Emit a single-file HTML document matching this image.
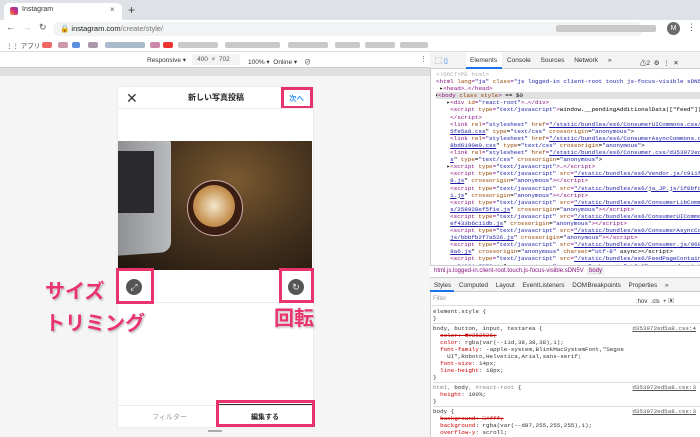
<!DOCTYPE html>
<html><head><meta charset="utf-8"><style>
*{margin:0;padding:0;box-sizing:border-box}
body{width:700px;height:437px;overflow:hidden;position:relative;background:#fff;font-family:"Liberation Sans","Noto Sans CJK JP",sans-serif;}
.a{position:absolute}
.mono{font-family:"Liberation Mono","Noto Sans CJK JP",monospace;font-size:5.9px;white-space:nowrap;line-height:7.1px;overflow:hidden}
.pk{border:3px solid #e8336d;position:absolute}
.lab{color:#e8336d;font-weight:bold;font-size:20px;position:absolute;font-family:"Noto Sans CJK JP",sans-serif;text-shadow:0 0 2px #fff,1px 1px 2px #999}
.tag{color:#881280}.at{color:#994500}.v{color:#1a1aa6}.u{color:#1a1aa6;text-decoration:underline}
.blur{position:absolute;top:42px;height:6px;background:#c9c9c9;border-radius:2px}
</style></head><body>
<div class="a" style="left:0;top:0;width:700px;height:20px;background:#dee1e6"></div>
<div class="a" style="left:4px;top:3px;width:118px;height:17px;background:#fff;border-radius:5px 5px 0 0"></div>
<div class="a" style="left:10px;top:7px;width:8px;height:8px;border-radius:2px;background:linear-gradient(45deg,#f9a13a,#d1307c,#7a3eb1)"></div>
<div class="a" style="left:22px;top:6px;font-size:7px;color:#333">Instagram</div>
<div class="a" style="left:110px;top:5px;font-size:8px;color:#555">×</div>
<div class="a" style="left:128px;top:3px;font-size:12px;color:#444">+</div>
<div class="a" style="left:0;top:20px;width:700px;height:18px;background:#fff"></div>
<div class="a" style="left:6px;top:22px;font-size:9px;color:#555">←&nbsp;&nbsp;&nbsp;<span style="color:#bbb">→</span>&nbsp;&nbsp;&nbsp;↻</div>
<div class="a" style="left:53px;top:22px;width:590px;height:14px;background:#f1f3f4;border-radius:7px"></div>
<div class="a" style="left:60px;top:24px;font-size:7.5px;color:#222">🔒 instagram.com<span style="color:#777">/create/style/</span></div>
<div class="blur" style="top:25px;left:556px;width:100px;height:7px"></div>
<div class="a" style="left:667px;top:22px;width:13px;height:13px;border-radius:50%;background:#6b6b6b;color:#fff;font-size:7px;text-align:center;line-height:13px">M</div>
<div class="a" style="left:687px;top:22px;font-size:9px;color:#555">⋮</div>
<div class="a" style="left:0;top:38px;width:700px;height:14px;background:#fff;border-bottom:1px solid #ddd"></div>
<div class="a" style="left:6px;top:40px;font-size:6.5px;color:#444">⋮⋮ アプリ</div>
<div class="blur" style="left:42px;width:10px;background:#e66"></div>
<div class="blur" style="left:58px;width:10px;background:#c9a"></div>
<div class="blur" style="left:72px;width:8px;background:#5b8fe0"></div>
<div class="blur" style="left:88px;width:10px;background:#a9a"></div>
<div class="blur" style="left:105px;width:40px;background:#abc"></div>
<div class="blur" style="left:150px;width:10px;background:#c8a"></div>
<div class="blur" style="left:163px;width:10px;background:#e33"></div>
<div class="blur" style="left:178px;width:40px"></div>
<div class="blur" style="left:225px;width:55px"></div>
<div class="blur" style="left:288px;width:40px"></div>
<div class="blur" style="left:335px;width:25px"></div>
<div class="blur" style="left:365px;width:30px"></div>
<div class="blur" style="left:400px;width:28px"></div>
<div class="a" style="left:0;top:52px;width:430px;height:15px;background:#fff"></div>
<div class="a" style="left:147px;top:56px;font-size:6.5px;color:#333">Responsive ▾</div>
<div class="a" style="left:192px;top:54px;width:48px;height:11px;background:#f3f3f3"></div>
<div class="a" style="left:197px;top:56px;font-size:6.5px;color:#555">400 &nbsp;× &nbsp;702</div>
<div class="a" style="left:248px;top:56px;font-size:6.5px;color:#333">100% ▾ &nbsp;Online ▾ &nbsp;&nbsp;&nbsp;⊘</div>
<div class="a" style="left:420px;top:55px;font-size:7px;color:#555">⋮</div>
<div class="a" style="left:0;top:67px;width:430px;height:9px;background:#e0e0e0;border-top:1px solid #ccc"></div>
<div class="a" style="left:0;top:76px;width:430px;height:361px;background:#f5f5f5"></div>
<div class="a" style="left:118px;top:87px;width:195px;height:340px;background:#fff;box-shadow:0 0 2px #ddd"></div>
<div class="a" style="left:126px;top:90px;font-size:14px;color:#333">✕</div>
<div class="a" style="left:188px;top:92px;font-size:8px;color:#222;font-weight:bold">新しい写真投稿</div>
<div class="a" style="left:289px;top:93px;font-size:7.5px;color:#3897f0;font-weight:bold">次へ</div>
<div class="pk" style="left:281px;top:87px;width:32px;height:22px"></div>
<div class="a" style="left:118px;top:108px;width:195px;height:1px;background:#eee"></div>
<div class="a" style="left:118px;top:141px;width:194px;height:129px;overflow:hidden;background:radial-gradient(ellipse at 60% 30%,#7a5a30 0%,#4a3520 45%,#1e150d 100%)">
 <div class="a" style="left:-5px;top:-5px;width:58px;height:118px;background:linear-gradient(90deg,#8a8c90,#b9bbbe);border-radius:0 10px 10px 0;transform:skewY(-4deg)"></div>
 <div class="a" style="left:0;top:10px;width:36px;height:62px;background:#2a2a2c"></div>
 <div class="a" style="left:69px;top:39px;width:56px;height:56px;border-radius:50%;background:#3a1e12;border:1px solid #caa"></div>
 <div class="a" style="left:75px;top:44px;width:42px;height:42px;border-radius:50%;background:radial-gradient(circle,#f3e6cc 0%,#c89556 60%,#9a6530 100%)"></div>
</div>
<div class="a" style="left:118px;top:302px;width:195px;height:1px;background:#eee"></div>
<div class="a" style="left:126px;top:279px;width:16px;height:16px;border-radius:50%;background:#555;color:#eee;font-size:9px;text-align:center;line-height:16px">⤢</div>
<div class="a" style="left:288px;top:279px;width:16px;height:16px;border-radius:50%;background:#555;color:#eee;font-size:9px;text-align:center;line-height:16px">↻</div>
<div class="pk" style="left:116px;top:268px;width:38px;height:36px"></div>
<div class="pk" style="left:279px;top:268px;width:35px;height:35px"></div>
<div class="lab" style="left:45px;top:275px">サイズ</div>
<div class="lab" style="left:45px;top:307px">トリミング</div>
<div class="lab" style="left:274px;top:302px">回転</div>
<div class="a" style="left:118px;top:405px;width:195px;height:1px;background:#eee"></div>
<div class="a" style="left:152px;top:412px;font-size:7px;color:#999">フィルター</div>
<div class="a" style="left:216px;top:404px;width:97px;height:1px;background:#333"></div>
<div class="a" style="left:251px;top:412px;font-size:7px;color:#222;font-weight:bold">編集する</div>
<div class="pk" style="left:216px;top:400px;width:99px;height:27px"></div>
<div class="a" style="left:208px;top:430px;width:14px;height:2px;border-top:1px solid #aaa;border-bottom:1px solid #aaa"></div>
<!-- devtools -->
<div class="a" style="left:430px;top:52px;width:270px;height:385px;background:#fff;border-left:1px solid #ccc"></div>
<div class="a" style="left:430px;top:52px;width:270px;height:17px;background:#f3f3f3;border-bottom:1px solid #ccc"></div>
<div class="a" style="left:435px;top:56px;font-size:7px;color:#555">⬚ <span style="color:#1a73e8">▯</span></div>
<div class="a" style="left:466px;top:52px;width:36px;height:17px;background:#fff;border-bottom:2px solid #1a73e8"></div>
<div class="a" style="left:470px;top:57px;font-size:6.5px;color:#333;word-spacing:8px">Elements Console Sources Network »</div>
<div class="a" style="left:640px;top:57px;font-size:6.5px;color:#333">⚠2 &nbsp;⚙ &nbsp;⋮ &nbsp;✕</div>
<div class="a mono" style="left:436px;top:71px;width:264px;height:194px">
<span style="color:#aaa">&lt;!DOCTYPE html&gt;</span><br>
<span class="tag">&lt;html <span class="at">lang</span>=<span class="v">"ja"</span> <span class="at">class</span>=<span class="v">"js logged-in client-root touch js-focus-visible sDN5V"</span>&gt;</span><br>
&nbsp;▸<span class="tag">&lt;head&gt;…&lt;/head&gt;</span><br>
<span style="background:#e0e0e0;display:inline-block;width:270px;margin-left:-6px;padding-left:1px">…▾<span class="tag">&lt;body <span class="at">class style</span>&gt;</span> == $0</span><br>
&nbsp;&nbsp;&nbsp;▸<span class="tag">&lt;div <span class="at">id</span>=<span class="v">"react-root"</span>&gt;…&lt;/div&gt;</span><br>
&nbsp;&nbsp;&nbsp;&nbsp;<span class="tag">&lt;script <span class="at">type</span>=<span class="v">"text/javascript"</span>&gt;</span>window.__pendingAdditionalData(["feed"]);<br>
&nbsp;&nbsp;&nbsp;&nbsp;<span class="tag">&lt;/script&gt;</span><br>
&nbsp;&nbsp;&nbsp;&nbsp;<span class="tag">&lt;link <span class="at">rel</span>=<span class="v">"stylesheet"</span> <span class="at">href</span>=<span class="u">"/static/bundles/es6/ConsumerUICommons.css/01aad4</span></span><br>
&nbsp;&nbsp;&nbsp;&nbsp;<span class="u">5fe5a8.css</span>" <span class="at">type</span>=<span class="v">"text/css"</span> <span class="at">crossorigin</span>=<span class="v">"anonymous"</span>&gt;<br>
&nbsp;&nbsp;&nbsp;&nbsp;<span class="tag">&lt;link <span class="at">rel</span>=<span class="v">"stylesheet"</span> <span class="at">href</span>=<span class="u">"/static/bundles/es6/ConsumerAsyncCommons.css/060</span></span><br>
&nbsp;&nbsp;&nbsp;&nbsp;<span class="u">8bd6190e0.css</span>" <span class="at">type</span>=<span class="v">"text/css"</span> <span class="at">crossorigin</span>=<span class="v">"anonymous"</span>&gt;<br>
&nbsp;&nbsp;&nbsp;&nbsp;<span class="tag">&lt;link <span class="at">rel</span>=<span class="v">"stylesheet"</span> <span class="at">href</span>=<span class="u">"/static/bundles/es6/Consumer.css/d353972ed5a8.cs</span></span><br>
&nbsp;&nbsp;&nbsp;&nbsp;<span class="u">s</span>" <span class="at">type</span>=<span class="v">"text/css"</span> <span class="at">crossorigin</span>=<span class="v">"anonymous"</span>&gt;<br>
&nbsp;&nbsp;&nbsp;▸<span class="tag">&lt;script <span class="at">type</span>=<span class="v">"text/javascript"</span>&gt;…&lt;/script&gt;</span><br>
&nbsp;&nbsp;&nbsp;&nbsp;<span class="tag">&lt;script <span class="at">type</span>=<span class="v">"text/javascript"</span> <span class="at">src</span>=<span class="u">"/static/bundles/es6/Vendor.js/c911f5848b7</span></span><br>
&nbsp;&nbsp;&nbsp;&nbsp;<span class="u">8.js</span>" <span class="at">crossorigin</span>=<span class="v">"anonymous"</span><span class="tag">&gt;&lt;/script&gt;</span><br>
&nbsp;&nbsp;&nbsp;&nbsp;<span class="tag">&lt;script <span class="at">type</span>=<span class="v">"text/javascript"</span> <span class="at">src</span>=<span class="u">"/static/bundles/es6/ja_JP.js/1f0bfdeda7f</span></span><br>
&nbsp;&nbsp;&nbsp;&nbsp;<span class="u">1.js</span>" <span class="at">crossorigin</span>=<span class="v">"anonymous"</span><span class="tag">&gt;&lt;/script&gt;</span><br>
&nbsp;&nbsp;&nbsp;&nbsp;<span class="tag">&lt;script <span class="at">type</span>=<span class="v">"text/javascript"</span> <span class="at">src</span>=<span class="u">"/static/bundles/es6/ConsumerLibCommons.j</span></span><br>
&nbsp;&nbsp;&nbsp;&nbsp;<span class="u">s/258928ef5f1e.js</span>" <span class="at">crossorigin</span>=<span class="v">"anonymous"</span><span class="tag">&gt;&lt;/script&gt;</span><br>
&nbsp;&nbsp;&nbsp;&nbsp;<span class="tag">&lt;script <span class="at">type</span>=<span class="v">"text/javascript"</span> <span class="at">src</span>=<span class="u">"/static/bundles/es6/ConsumerUICommons.js/</span></span><br>
&nbsp;&nbsp;&nbsp;&nbsp;<span class="u">ef433b6c11db.js</span>" <span class="at">crossorigin</span>=<span class="v">"anonymous"</span><span class="tag">&gt;&lt;/script&gt;</span><br>
&nbsp;&nbsp;&nbsp;&nbsp;<span class="tag">&lt;script <span class="at">type</span>=<span class="v">"text/javascript"</span> <span class="at">src</span>=<span class="u">"/static/bundles/es6/ConsumerAsyncCommons.</span></span><br>
&nbsp;&nbsp;&nbsp;&nbsp;<span class="u">js/bbbfb2f7a526.js</span>" <span class="at">crossorigin</span>=<span class="v">"anonymous"</span><span class="tag">&gt;&lt;/script&gt;</span><br>
&nbsp;&nbsp;&nbsp;&nbsp;<span class="tag">&lt;script <span class="at">type</span>=<span class="v">"text/javascript"</span> <span class="at">src</span>=<span class="u">"/static/bundles/es6/Consumer.js/9606c091a</span></span><br>
&nbsp;&nbsp;&nbsp;&nbsp;<span class="u">9a6.js</span>" <span class="at">crossorigin</span>=<span class="v">"anonymous"</span> <span class="at">charset</span>=<span class="v">"utf-8"</span> async&gt;&lt;/script&gt;<br>
&nbsp;&nbsp;&nbsp;&nbsp;<span class="tag">&lt;script <span class="at">type</span>=<span class="v">"text/javascript"</span> <span class="at">src</span>=<span class="u">"/static/bundles/es6/FeedPageContainer.js/</span></span><br>
&nbsp;&nbsp;&nbsp;&nbsp;<span class="u">ac54301af272.js</span>" <span class="at">crossorigin</span>=<span class="v">"anonymous"</span> <span class="at">charset</span>=<span class="v">"utf-8"</span> async&gt;&lt;/script&gt;
</div>
<div class="a" style="left:430px;top:265px;width:270px;height:13px;background:#fff;border-top:1px solid #ccc;border-bottom:1px solid #ccc"></div>
<div class="a" style="left:434px;top:268px;font-size:6px;color:#881280;white-space:nowrap">html.js.logged-in.client-root.touch.js-focus-visible.sDN5V &nbsp;<span style="background:#eee;padding:1px 2px">body</span></div>
<div class="a" style="left:430px;top:278px;width:270px;height:14px;background:#f3f3f3;border-bottom:1px solid #ccc"></div>
<div class="a" style="left:434px;top:282px;font-size:6.3px;color:#333;word-spacing:6px;white-space:nowrap">Styles Computed Layout Event&#8202;Listeners DOM&#8202;Breakpoints Properties »</div>
<div class="a" style="left:430px;top:290px;width:24px;height:2px;background:#1a73e8"></div>
<div class="a" style="left:433px;top:296px;font-size:6px;color:#999">Filter</div>
<div class="a" style="left:636px;top:296px;font-size:6px;color:#333">:hov &nbsp;.cls &nbsp;+ ▣</div>
<div class="a" style="left:430px;top:305px;width:270px;height:1px;background:#ddd"></div>
<div class="a mono" style="left:433px;top:308px;width:267px;height:129px;line-height:7px;color:#333">
element.style {<br>}<br>
<span style="display:block;border-top:1px solid #ddd;margin:1px 0 1px -3px;width:270px"></span>
body, button, input, textarea {<span style="float:right;margin-right:4px;color:#555;text-decoration:underline">d353972ed5a8.css:4</span><br>
&nbsp;&nbsp;<s style="color:#c80000">color: ■#262626;</s><br>
&nbsp;&nbsp;<span style="color:#c80000">color</span>: rgba(var(--i1d,38,38,38),1);<br>
&nbsp;&nbsp;<span style="color:#c80000">font-family</span>: -apple-system,BlinkMacSystemFont,"Segoe<br>
&nbsp;&nbsp;&nbsp;&nbsp;UI",Roboto,Helvetica,Arial,sans-serif;<br>
&nbsp;&nbsp;<span style="color:#c80000">font-size</span>: 14px;<br>
&nbsp;&nbsp;<span style="color:#c80000">line-height</span>: 18px;<br>}<br>
<span style="display:block;border-top:1px solid #ddd;margin:1px 0 1px -3px;width:270px"></span>
<span style="color:#888">html, </span>body<span style="color:#888">, #react-root</span> {<span style="float:right;margin-right:4px;color:#555;text-decoration:underline">d353972ed5a8.css:3</span><br>
&nbsp;&nbsp;<span style="color:#c80000">height</span>: 100%;<br>}<br>
<span style="display:block;border-top:1px solid #ddd;margin:1px 0 1px -3px;width:270px"></span>
body {<span style="float:right;margin-right:4px;color:#555;text-decoration:underline">d353972ed5a8.css:3</span><br>
&nbsp;&nbsp;<s style="color:#c80000">background: □#fff;</s><br>
&nbsp;&nbsp;<span style="color:#c80000">background</span>: rgba(var(--d87,255,255,255),1);<br>
&nbsp;&nbsp;<span style="color:#c80000">overflow-y</span>: scroll;<br>}
</div>
</body></html>
